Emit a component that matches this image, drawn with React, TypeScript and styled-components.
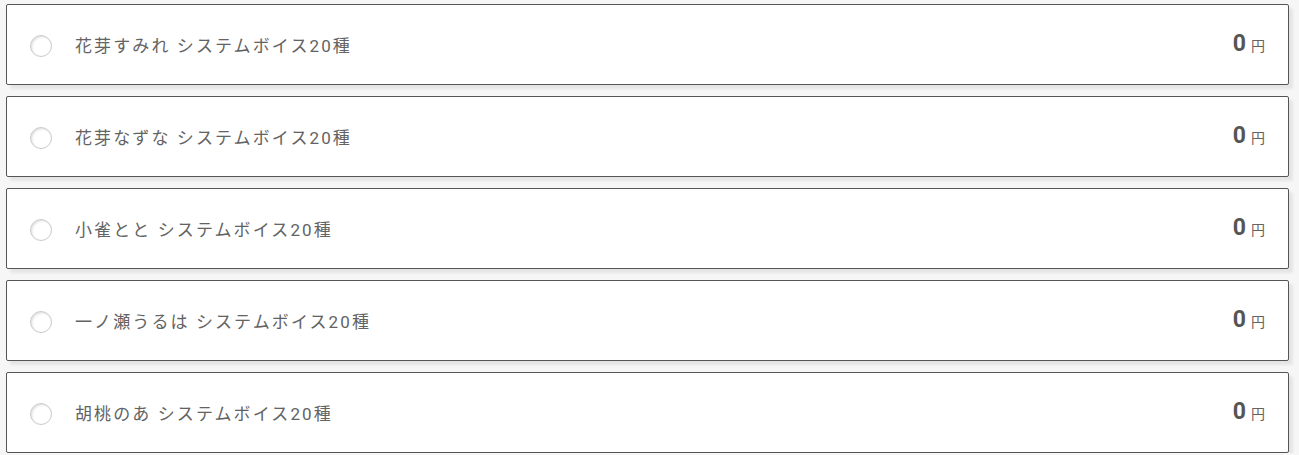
import React from "react";
import styled, { createGlobalStyle } from "styled-components";

const GlobalStyle = createGlobalStyle`
  html, body {
    margin: 0;
    padding: 0;
    background: #f6f6f6;
  }
  body {
    font-family: Roboto, "Noto Sans CJK JP", sans-serif;
    color: #555;
  }
`;

const List = styled.ul`
  list-style: none;
  margin: 0;
  padding: 4px 10px 0 6px;
  display: flex;
  flex-direction: column;
  gap: 11px;
`;

const Card = styled.li`
  box-sizing: border-box;
  height: 81px;
  background: #fff;
  border: 1px solid #555;
  border-radius: 2px;
  box-shadow: 4px 4px 3px rgba(0, 0, 0, 0.07);
  display: flex;
  align-items: center;
  padding: 0 23px 0 23px;
`;

const Radio = styled.span`
  box-sizing: border-box;
  width: 22px;
  height: 22px;
  border-radius: 50%;
  border: 1px solid #cacaca;
  background: radial-gradient(circle at 60% 60%, #fff 50%, #efefef 100%);
  box-shadow: inset 1px 1px 2px rgba(0, 0, 0, 0.1);
  flex: none;
  margin-top: 2px;
`;

const Label = styled.span`
  margin-left: 23px;
  font-size: 17px;
  font-weight: 400;
  letter-spacing: 2.1px;
  color: #636363;
  flex: 1;
`;

const Price = styled.span`
  display: flex;
  align-items: baseline;
  color: #555;
  margin-top: -2px;
`;

const Amount = styled.span`
  font-size: 23px;
  font-weight: 700;
  font-family: Roboto, sans-serif;
`;

const Unit = styled.span`
  font-size: 14px;
  font-weight: 400;
  margin-left: 5px;
  color: #636363;
`;

const items = [
  "花芽すみれ システムボイス20種",
  "花芽なずな システムボイス20種",
  "小雀とと システムボイス20種",
  "一ノ瀬うるは システムボイス20種",
  "胡桃のあ システムボイス20種",
];

export default function App() {
  return (
    <>
      <GlobalStyle />
      <List>
        {items.map((t) => (
          <Card key={t}>
            <Radio />
            <Label>{t}</Label>
            <Price>
              <Amount>0</Amount>
              <Unit>円</Unit>
            </Price>
          </Card>
        ))}
      </List>
    </>
  );
}
